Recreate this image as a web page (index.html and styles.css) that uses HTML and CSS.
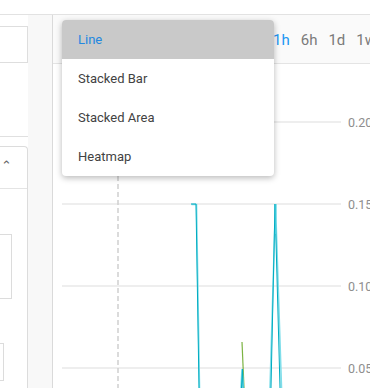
FILE: index.html
```html
<!DOCTYPE html>
<html>
<head>
    <meta charset="UTF-8">
    <title>Metrics</title>
    <link rel="stylesheet" href="styles.css">
</head>
<body>
    <div class="topbar"></div>
    <div class="main">
        <div class="sidebar">
            <div class="search-box"></div>
            <div class="divider"></div>
            <div class="card">
                <div class="card-head"><span class="chevron">&#8963;</span></div>
                <div class="card-body">
                    <div class="field field-wide"></div>
                    <div class="field field-narrow"></div>
                </div>
            </div>
        </div>
        <div class="gutter"></div>
        <div class="chart-panel">
            <div class="chart-header">
                <div class="ranges">
                    <span class="range active">1h</span>
                    <span class="range">6h</span>
                    <span class="range">1d</span>
                    <span class="range">1w</span>
                </div>
            </div>
            <svg class="plot" width="317" height="324" viewBox="0 0 317 324">
                <!-- grid -->
                <g stroke="#e8e8e8" stroke-width="1.5">
                    <line x1="9" y1="58" x2="288" y2="58"/>
                    <line x1="9" y1="140" x2="288" y2="140"/>
                    <line x1="9" y1="222" x2="288" y2="222"/>
                    <line x1="9" y1="304" x2="288" y2="304"/>
                </g>
                <g class="axis-label">
                    <text x="295" y="62.5">0.20</text>
                    <text x="295" y="144.5">0.15</text>
                    <text x="295" y="226.5">0.10</text>
                    <text x="295" y="308.5">0.05</text>
                </g>
                <line x1="65" y1="0" x2="65" y2="324" stroke="#cfcfcf" stroke-width="1.5" stroke-dasharray="5 3"/>
                <!-- series -->
                <polyline fill="none" stroke="#7cb342" stroke-width="1.2" points="189,278 191,324"/>
                <polyline fill="none" stroke="#80deea" stroke-width="1.6" points="138.5,140.5 143.5,140.5 146.5,324"/>
                <polyline fill="none" stroke="#00acc1" stroke-width="1" points="138,140 143,140 146,324"/>
                <polyline fill="none" stroke="#80deea" stroke-width="1.6" points="188,324 189,305 190.5,324"/>
                <polyline fill="none" stroke="#00acc1" stroke-width="1" points="188.5,324 189.5,305 190,324"/>
                <polyline fill="none" stroke="#80deea" stroke-width="1.6" points="217,324 222.5,140 228.5,324"/>
                <polyline fill="none" stroke="#00acc1" stroke-width="1" points="218,324 222,140 227,324"/>
                <polyline fill="none" stroke="#4dd0e1" stroke-width="1" points="222.5,170 223,140"/>
            </svg>
        </div>
    </div>

    <div class="chart-menu">
        <div class="menu-item selected">Line</div>
        <div class="menu-item">Stacked Bar</div>
        <div class="menu-item">Stacked Area</div>
        <div class="menu-item">Heatmap</div>
    </div>
</body>
</html>
```

FILE: styles.css
```css
body {
    margin: 0;
    padding: 0;
    font-family: Roboto, "Liberation Sans", Arial, sans-serif;
    background-color: #fff;
    width: 370px;
    height: 388px;
    overflow: hidden;
}
.topbar {
    height: 14px;
    background-color: #fff;
    border-bottom: 1px solid #e2e2e2;
}
.main {
    display: flex;
    height: 373px;
}
.sidebar {
    width: 28px;
    flex-shrink: 0;
    display: flex;
    flex-direction: column;
    background-color: #fff;
}
.search-box {
    margin: 11px 0 0 -2px;
    height: 35px;
    border: 1px solid #dedede;
    background-color: #fff;
}
.divider {
    margin-top: 73px;
    margin-left: -2px;
    border-top: 1px solid #e0e0e0;
}
.card {
    margin: 9px 0 0 -2px;
    flex: 1;
    border: 1px solid #dcdcdc;
    border-bottom: none;
    border-top-right-radius: 4px;
    display: flex;
    flex-direction: column;
}
.card-head {
    height: 41px;
    border-bottom: 1px solid #e4e4e4;
    position: relative;
}
.chevron {
    position: absolute;
    left: 2px;
    top: 11px;
    font-size: 13px;
    color: #666;
}
.card-body {
    display: flex;
    flex-direction: column;
}
.field {
    border: 1px solid #dcdcdc;
    margin-left: -2px;
}
.field-wide {
    margin-top: 45px;
    width: 13px;
    height: 63px;
}
.field-narrow {
    margin-top: 44px;
    width: 5px;
    height: 36px;
}
.gutter {
    width: 24px;
    flex-shrink: 0;
    background-color: #f8f8f8;
    border-right: 1px solid #dadada;
}
.chart-panel {
    flex: 1;
    min-width: 0;
    overflow: hidden;
    display: flex;
    flex-direction: column;
}
.chart-header {
    height: 48px;
    flex-shrink: 0;
    background-color: #fafafa;
    border-bottom: 1px solid #e4e4e4;
    display: flex;
    align-items: center;
}
.ranges {
    display: flex;
    gap: 11px;
    padding-left: 220px;
    padding-top: 2px;
    white-space: nowrap;
}
.range {
    font-size: 15px;
    color: #7a7a7a;
}
.range.active {
    color: #2196f3;
}
.plot {
    display: block;
    flex-shrink: 0;
}
.axis-label text {
    font-family: Roboto, "Liberation Sans", sans-serif;
    font-size: 12.5px;
    fill: #8e8e8e;
}
.chart-menu {
    position: absolute;
    left: 62px;
    top: 20px;
    width: 212px;
    background-color: #fff;
    border-radius: 4px;
    box-shadow: 0 2px 6px rgba(0, 0, 0, 0.28);
    overflow: hidden;
}
.menu-item {
    height: 39px;
    line-height: 39px;
    padding-left: 16px;
    font-size: 13px;
    color: #424242;
}
.menu-item.selected {
    background-color: #c9c9c9;
    color: #2388e0;
}
```
